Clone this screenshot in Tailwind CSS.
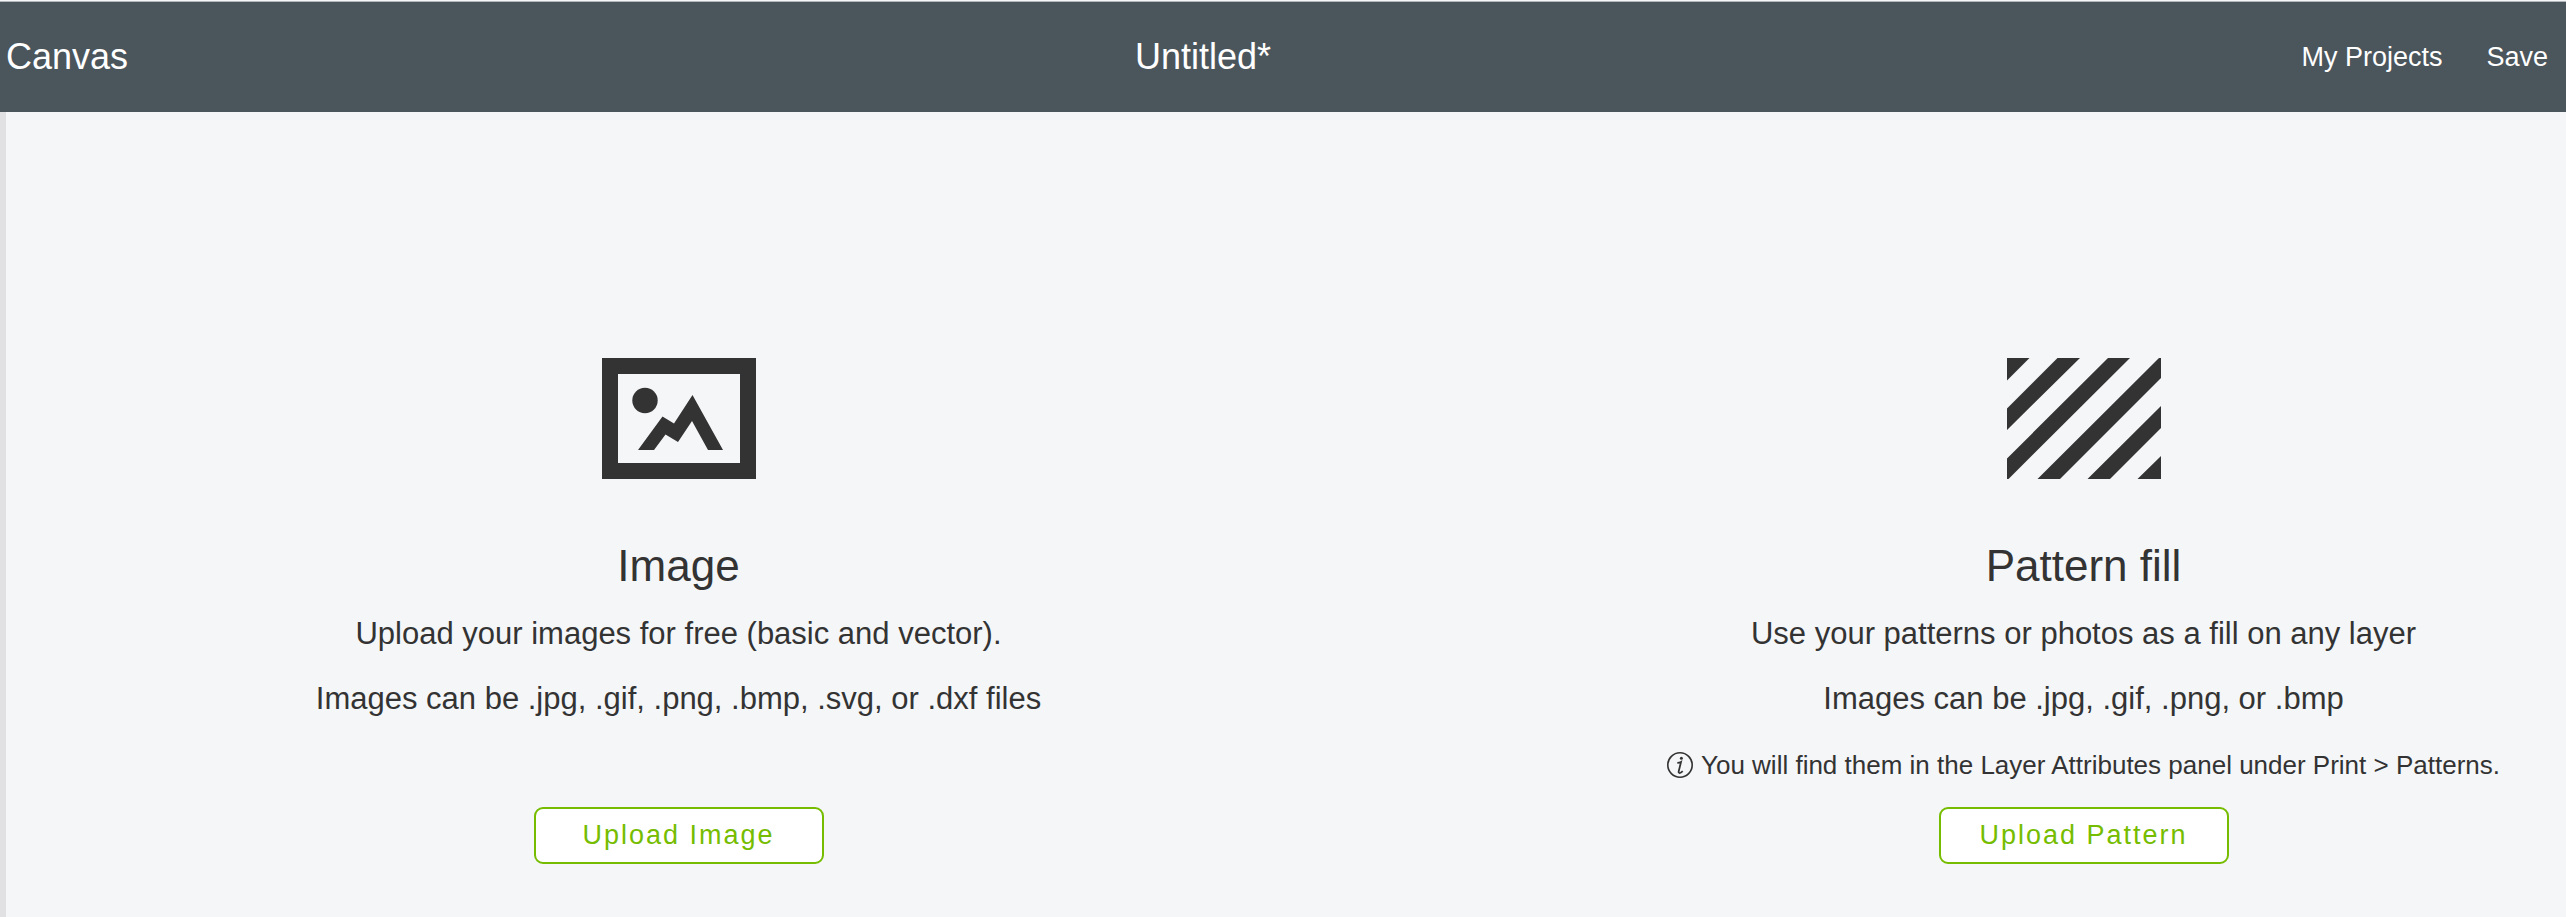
<!DOCTYPE html>
<html lang="en">
<head>
<meta charset="utf-8">
<title>Canvas</title>
<script src="https://cdn.jsdelivr.net/npm/@tailwindcss/browser@4"></script>
</head>
<body class="flex min-h-screen flex-col bg-[#f5f6f8] font-['Liberation_Sans',Arial,sans-serif] text-[#333333]">
<header class="mt-px grid grid-cols-[1135fr_1431fr] items-center border-t border-[#b4b8bb] bg-[#4b555c] text-white">
  <h1 class="pl-[6px] text-[36px] leading-[110px]">Canvas</h1>
  <div class="flex items-center justify-between pr-[18px]">
    <p class="text-[36px] leading-[110px]">Untitled*</p>
    <nav class="flex gap-[44px] text-[27px] leading-[110px]">
      <a href="#projects">My Projects</a>
      <button type="button">Save</button>
    </nav>
  </div>
</header>
<main class="grid grow grid-cols-[1345fr_965fr] gap-[250px] border-l-6 border-[#e1e1e3] pt-[246px] text-center">
  <section class="flex flex-col items-center">
    <svg class="h-[121px] w-[154px]" viewBox="0 0 154 121" fill="#333" aria-hidden="true">
      <path fill-rule="evenodd" d="M0 0H154V121H0ZM16 16V105H138V16Z"/>
      <circle cx="43" cy="42.500" r="12.700"/>
      <path d="M36 92 60.500 58.500 72 65.500 90.500 37 121 92H106L90 63 76 84 63.500 76.500 52 92Z"/>
    </svg>
    <h2 class="mt-[59px] text-[44px] leading-[56px]">Image</h2>
    <p class="mt-[8px] text-[31px] leading-[64px]">Upload your images for free (basic and vector).</p>
    <p class="text-[31px] leading-[66px]">Images can be .jpg, .gif, .png, .bmp, .svg, or .dxf files</p>
    <button type="button" class="mt-[75px] h-[57px] w-[290px] rounded-[9px] border-2 border-[#76bc00] bg-white text-[27px] tracking-[2px] text-[#76bc00]">Upload Image</button>
  </section>
  <section class="flex flex-col items-center">
    <svg class="h-[121px] w-[154px]" viewBox="0 0 154 121" fill="#333" aria-hidden="true">
      <path d="M0 0H22.500L0 22.500ZM50.500 0H73L0 72V50.500ZM101 0H123L1.500 121H0V100.500ZM152 0H154V20L53 121H30.500ZM154 48V70L103 121H80.500ZM154 98V121H130.500Z"/>
    </svg>
    <h2 class="mt-[59px] text-[44px] leading-[56px]">Pattern fill</h2>
    <p class="mt-[8px] text-[31px] leading-[64px]">Use your patterns or photos as a fill on any layer</p>
    <p class="text-[31px] leading-[66px]">Images can be .jpg, .gif, .png, or .bmp</p>
    <p class="flex items-center gap-[8px] text-[26px] leading-[66px]">
      <svg class="size-[26px]" viewBox="0 0 26 26" fill="none" stroke="#333" aria-hidden="true">
        <circle cx="13" cy="13" r="12.200" stroke-width="1.600"/>
        <circle cx="14.400" cy="6.200" r="1.500" fill="#333" stroke="none"/>
        <path d="M10.300 10.800C11.500 10.800 13 10.600 14 10L11.700 19.400C11.300 21.600 13.300 21.600 15.700 19.200" stroke-width="1.800"/>
      </svg>
      You will find them in the Layer Attributes panel under Print &gt; Patterns.
    </p>
    <button type="button" class="mt-[9px] h-[57px] w-[290px] rounded-[9px] border-2 border-[#76bc00] bg-white text-[27px] tracking-[2px] text-[#76bc00]">Upload Pattern</button>
  </section>
</main>
</body>
</html>
